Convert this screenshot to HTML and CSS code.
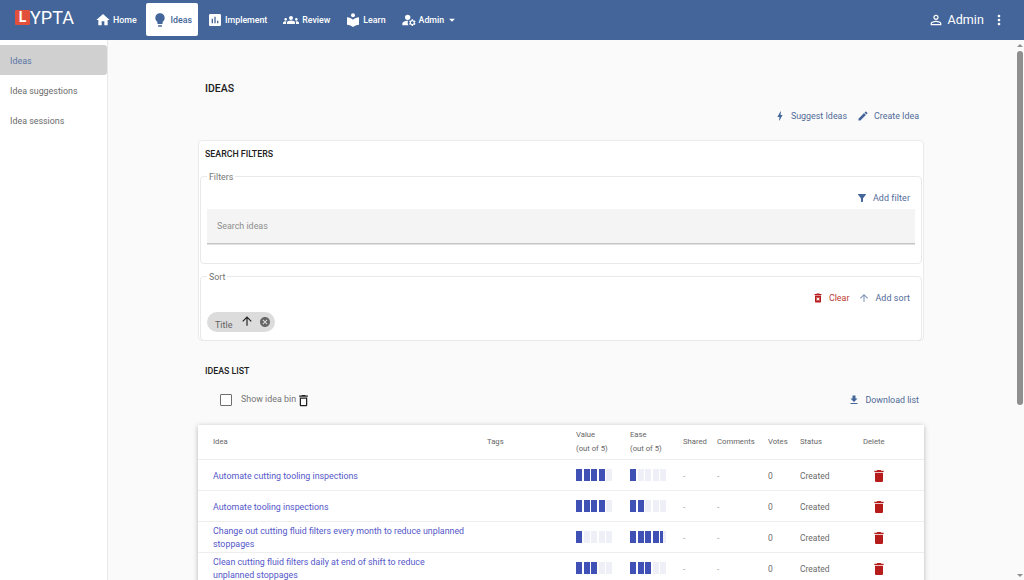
FILE: index.html
```html
<!DOCTYPE html>
<html lang="en">
<head>
<meta charset="utf-8">
<title>Ideas</title>
<link rel="stylesheet" href="styles.css">
</head>
<body>
<svg class="sprite" aria-hidden="true">
  <symbol id="i-home" viewBox="0 0 24 24"><path d="M10 20v-6h4v6h5v-8h3L12 3 2 12h3v8z"/></symbol>
  <symbol id="i-bulb" viewBox="0 0 24 24"><path d="M9 21c0 .55.45 1 1 1h4c.55 0 1-.45 1-1v-1H9v1zm3-19C8.14 2 5 5.14 5 9c0 2.38 1.19 4.47 3 5.74V17c0 .55.45 1 1 1h6c.55 0 1-.45 1-1v-2.26c1.81-1.27 3-3.36 3-5.74 0-3.86-3.14-7-7-7z"/></symbol>
  <symbol id="i-chart" viewBox="0 0 24 24"><path d="M19 3H5c-1.1 0-2 .9-2 2v14c0 1.1.9 2 2 2h14c1.1 0 2-.9 2-2V5c0-1.1-.9-2-2-2zM9 17H7v-7h2v7zm4 0h-2V7h2v10zm4 0h-2v-4h2v4z"/></symbol>
  <symbol id="i-groups" viewBox="0 0 24 24"><path d="M12 12.75c1.63 0 3.07.39 4.24.9 1.08.48 1.76 1.56 1.76 2.73V18H6v-1.61c0-1.18.68-2.26 1.76-2.73 1.17-.52 2.61-.91 4.24-.91zM4 13c1.1 0 2-.9 2-2s-.9-2-2-2-2 .9-2 2 .9 2 2 2zm1.13 1.1c-.37-.06-.74-.1-1.13-.1-.99 0-1.93.21-2.78.58C.48 14.9 0 15.62 0 16.43V18h4.5v-1.61c0-.83.23-1.61.63-2.29zM20 13c1.1 0 2-.9 2-2s-.9-2-2-2-2 .9-2 2 .9 2 2 2zm4 3.43c0-.81-.48-1.53-1.22-1.85-.85-.37-1.79-.58-2.78-.58-.39 0-.76.04-1.13.1.4.68.63 1.46.63 2.29V18H24v-1.57zM12 6c1.66 0 3 1.34 3 3s-1.34 3-3 3-3-1.34-3-3 1.34-3 3-3z"/></symbol>
  <symbol id="i-learn" viewBox="0 0 24 24"><path d="M12 11.55C9.64 9.35 6.48 8 3 8v11c3.48 0 6.64 1.35 9 3.55 2.36-2.19 5.52-3.55 9-3.55V8c-3.48 0-6.64 1.35-9 3.55zM12 8c1.66 0 3-1.34 3-3s-1.34-3-3-3-3 1.34-3 3 1.34 3 3 3z"/></symbol>
  <symbol id="i-manage" viewBox="0 0 24 24"><circle cx="10" cy="8" r="4"/><path d="M10.67 13.02c-.22-.01-.44-.02-.67-.02-2.42 0-4.68.67-6.61 1.82-.88.52-1.39 1.5-1.39 2.53V20h9.26c-.79-1.13-1.26-2.51-1.26-4 0-1.07.25-2.07.67-2.98zM20.75 16c0-.22-.03-.42-.06-.63l1.14-1.01-1-1.73-1.45.49c-.32-.27-.68-.48-1.08-.63L18 11h-2l-.3 1.49c-.4.15-.76.36-1.08.63l-1.45-.49-1 1.73 1.14 1.01c-.03.21-.06.41-.06.63s.03.42.06.63l-1.14 1.01 1 1.73 1.45-.49c.32.27.68.48 1.08.63L16 21h2l.3-1.49c.4-.15.76-.36 1.08-.63l1.45.49 1-1.73-1.14-1.01c.03-.21.06-.41.06-.63zM17 18c-1.1 0-2-.9-2-2s.9-2 2-2 2 .9 2 2-.9 2-2 2z"/></symbol>
  <symbol id="i-caret" viewBox="0 0 24 24"><path d="M7 10l5 5 5-5z"/></symbol>
  <symbol id="i-person" viewBox="0 0 24 24"><path d="M12 5.9c1.16 0 2.1.94 2.1 2.1s-.94 2.1-2.1 2.1S9.9 9.16 9.9 8s.94-2.1 2.1-2.1m0 9c2.97 0 6.1 1.46 6.1 2.1v1.1H5.9V17c0-.64 3.13-2.1 6.1-2.1M12 4C9.79 4 8 5.79 8 8s1.79 4 4 4 4-1.79 4-4-1.79-4-4-4zm0 9c-2.67 0-8 1.34-8 4v3h16v-3c0-2.66-5.33-4-8-4z"/></symbol>
  <symbol id="i-more" viewBox="0 0 24 24"><path d="M12 8c1.1 0 2-.9 2-2s-.9-2-2-2-2 .9-2 2 .9 2 2 2zm0 2c-1.1 0-2 .9-2 2s.9 2 2 2 2-.9 2-2-.9-2-2-2zm0 6c-1.1 0-2 .9-2 2s.9 2 2 2 2-.9 2-2-.9-2-2-2z"/></symbol>
  <symbol id="i-bolt" viewBox="0 0 24 24"><path d="M11 21h-1l1-7H7.5c-.58 0-.57-.32-.38-.66.19-.34.05-.08.07-.12C8.48 10.94 10.42 7.54 13 3h1l-1 7h3.5c.49 0 .56.33.47.51l-.07.15C12.96 17.55 11 21 11 21z"/></symbol>
  <symbol id="i-edit" viewBox="0 0 24 24"><path d="M3 17.25V21h3.75L17.81 9.94l-3.75-3.75L3 17.25zM20.71 7.04c.39-.39.39-1.02 0-1.41l-2.34-2.34c-.39-.39-1.02-.39-1.41 0l-1.83 1.83 3.75 3.75 1.83-1.83z"/></symbol>
  <symbol id="i-filter" viewBox="0 0 24 24"><path d="M4.25 5.61C6.27 8.2 10 13 10 13v6c0 .55.45 1 1 1h2c.55 0 1-.45 1-1v-6s3.72-4.8 5.74-7.39c.51-.66.04-1.61-.79-1.61H5.04c-.83 0-1.3.95-.79 1.61z"/></symbol>
  <symbol id="i-clear" viewBox="0 0 24 24"><path d="M6 19c0 1.1.9 2 2 2h8c1.1 0 2-.9 2-2V7H6v12zm2.46-7.12l1.41-1.41L12 12.59l2.12-2.12 1.41 1.41L13.41 14l2.12 2.12-1.41 1.41L12 15.41l-2.12 2.12-1.41-1.41L10.59 14l-2.13-2.12zM15.5 4l-1-1h-5l-1 1H5v2h14V4z"/></symbol>
  <symbol id="i-delete" viewBox="0 0 24 24"><path d="M6 19c0 1.1.9 2 2 2h8c1.1 0 2-.9 2-2V7H6v12zM19 4h-3.5l-1-1h-5l-1 1H5v2h14V4z"/></symbol>
  <symbol id="i-bin" viewBox="0 0 24 24"><path d="M6 19c0 1.1.9 2 2 2h8c1.1 0 2-.9 2-2V7H6v12zM8 9h8v10H8V9zm7.5-5l-1-1h-5l-1 1H5v2h14V4z"/></symbol>
  <symbol id="i-up" viewBox="0 0 24 24"><path d="M4 12l1.41 1.41L11 7.83V20h2V7.83l5.58 5.59L20 12l-8-8-8 8z"/></symbol>
  <symbol id="i-download" viewBox="0 0 24 24"><path d="M19 9h-4V3H9v6H5l7 7 7-7zM5 18v2h14v-2H5z"/></symbol>
  <symbol id="i-cancel" viewBox="0 0 24 24"><path d="M12 2C6.47 2 2 6.47 2 12s4.47 10 10 10 10-4.47 10-10S17.53 2 12 2zm5 13.59L15.59 17 12 13.41 8.41 17 7 15.59 10.59 12 7 8.41 8.41 7 12 10.59 15.59 7 17 8.41 13.41 12 17 15.59z"/></symbol>
</svg>

<header class="topbar">
  <div class="logo"><span class="logo-mark">L</span><span class="logo-text">YPTA</span></div>
  <nav class="nav">
    <a class="nav-item"><svg class="nav-icon"><use href="#i-home"/></svg>Home</a>
    <a class="nav-item active"><svg class="nav-icon"><use href="#i-bulb"/></svg>Ideas</a>
    <a class="nav-item"><svg class="nav-icon"><use href="#i-chart"/></svg>Implement</a>
    <a class="nav-item"><svg class="nav-icon wide"><use href="#i-groups"/></svg>Review</a>
    <a class="nav-item"><svg class="nav-icon nudge"><use href="#i-learn"/></svg>Learn</a>
    <a class="nav-item"><svg class="nav-icon nudge"><use href="#i-manage"/></svg>Admin<svg class="nav-caret"><use href="#i-caret"/></svg></a>
  </nav>
  <div class="user">
    <svg class="user-icon"><use href="#i-person"/></svg>
    <span class="user-name">Admin</span>
    <svg class="user-more"><use href="#i-more"/></svg>
  </div>
</header>

<div class="body-row">
  <aside class="sidebar">
    <a class="side-item active">Ideas</a>
    <a class="side-item">Idea suggestions</a>
    <a class="side-item">Idea sessions</a>
  </aside>

  <main class="main">
    <h1 class="page-title">IDEAS</h1>
    <div class="actions page-actions">
      <a class="action"><svg class="action-icon"><use href="#i-bolt"/></svg>Suggest Ideas</a>
      <a class="action"><svg class="action-icon"><use href="#i-edit"/></svg>Create Idea</a>
    </div>

    <section class="card">
      <h2 class="card-title">SEARCH FILTERS</h2>
      <fieldset class="group">
        <legend class="group-label">Filters</legend>
        <div class="actions group-actions">
          <a class="action"><svg class="action-icon"><use href="#i-filter"/></svg>Add filter</a>
        </div>
        <div class="search">Search ideas</div>
      </fieldset>
      <fieldset class="group sort-group">
        <legend class="group-label">Sort</legend>
        <div class="actions group-actions">
          <a class="action danger"><svg class="action-icon"><use href="#i-clear"/></svg>Clear</a>
          <a class="action"><svg class="action-icon muted"><use href="#i-up"/></svg>Add sort</a>
        </div>
        <div class="chip">
          <span class="chip-label">Title</span>
          <svg class="chip-arrow"><use href="#i-up"/></svg>
          <svg class="chip-close"><use href="#i-cancel"/></svg>
        </div>
      </fieldset>
    </section>

    <h2 class="list-title">IDEAS LIST</h2>
    <div class="list-tools">
      <label class="bin-toggle">
        <span class="checkbox"></span>
        <span class="bin-label">Show idea bin</span>
        <svg class="bin-icon"><use href="#i-bin"/></svg>
      </label>
      <a class="action"><svg class="action-icon"><use href="#i-download"/></svg>Download list</a>
    </div>

    <div class="table-wrap">
      <table class="table">
        <thead>
          <tr>
            <th class="c-idea">Idea</th>
            <th class="c-tags">Tags</th>
            <th class="c-value">Value<br>(out of 5)</th>
            <th class="c-ease">Ease<br>(out of 5)</th>
            <th class="c-shared">Shared</th>
            <th class="c-comments">Comments</th>
            <th class="c-votes">Votes</th>
            <th class="c-status">Status</th>
            <th class="c-delete">Delete</th>
          </tr>
        </thead>
        <tbody>
          <tr>
            <td><a class="idea-link">Automate cutting tooling inspections</a></td>
            <td></td>
            <td><div class="meter"><i class="on"></i><i class="on"></i><i class="on"></i><i class="on"></i><i></i></div></td>
            <td><div class="meter"><i class="on"></i><i></i><i></i><i></i><i></i></div></td>
            <td class="dash">-</td><td class="dash">-</td><td>0</td><td>Created</td>
            <td><svg class="row-delete"><use href="#i-delete"/></svg></td>
          </tr>
          <tr>
            <td><a class="idea-link">Automate tooling inspections</a></td>
            <td></td>
            <td><div class="meter"><i class="on"></i><i class="on"></i><i class="on"></i><i class="on"></i><i></i></div></td>
            <td><div class="meter"><i class="on"></i><i class="on"></i><i></i><i></i><i></i></div></td>
            <td class="dash">-</td><td class="dash">-</td><td>0</td><td>Created</td>
            <td><svg class="row-delete"><use href="#i-delete"/></svg></td>
          </tr>
          <tr>
            <td><a class="idea-link">Change out cutting fluid filters every month to reduce unplanned stoppages</a></td>
            <td></td>
            <td><div class="meter"><i class="on"></i><i></i><i></i><i></i><i></i></div></td>
            <td><div class="meter"><i class="on"></i><i class="on"></i><i class="on"></i><i class="on"></i><i class="part"></i></div></td>
            <td class="dash">-</td><td class="dash">-</td><td>0</td><td>Created</td>
            <td><svg class="row-delete"><use href="#i-delete"/></svg></td>
          </tr>
          <tr>
            <td><a class="idea-link">Clean cutting fluid filters daily at end of shift to reduce unplanned stoppages</a></td>
            <td></td>
            <td><div class="meter"><i class="on"></i><i class="on"></i><i class="on"></i><i></i><i></i></div></td>
            <td><div class="meter"><i class="on"></i><i class="on"></i><i class="on"></i><i></i><i></i></div></td>
            <td class="dash">-</td><td class="dash">-</td><td>0</td><td>Created</td>
            <td><svg class="row-delete"><use href="#i-delete"/></svg></td>
          </tr>
        </tbody>
      </table>
    </div>
  </main>

  <div class="scrollbar">
    <span class="scroll-arrow up"></span>
    <span class="scroll-thumb"></span>
    <span class="scroll-arrow down"></span>
  </div>
</div>
</body>
</html>
```

FILE: styles.css
```css
* { box-sizing: border-box; }
html, body { margin: 0; height: 100%; overflow: hidden; }
body {
  display: flex;
  flex-direction: column;
  width: 1024px;
  height: 580px;
  background: #fafafa;
  font-family: Roboto, "Liberation Sans", sans-serif;
  font-size: 9px;
  color: #616161;
}
svg { fill: currentColor; display: block; flex: none; }
.sprite { display: none; }

/* top bar */
.topbar {
  flex: none;
  height: 40px;
  display: flex;
  align-items: center;
  background: #43659a;
  color: #fff;
}
.logo { width: 88px; padding-left: 15px; display: flex; align-items: center; height: 40px; padding-bottom: 6px; flex: none; }
.logo-mark {
  width: 15px;
  height: 15px;
  background: #e2503c;
  border-radius: 1px;
  color: #fff;
  font-size: 14px;
  font-weight: 700;
  line-height: 15px;
  text-align: center;
}
.logo-text { font-size: 18px; line-height: 15px; }
.nav { display: flex; align-items: center; }
.nav-item {
  display: flex;
  align-items: center;
  height: 33px;
  padding: 0 7px;
  gap: 2px;
  border-radius: 2px;
  font-size: 8.8px;
  font-weight: 500;
  color: #fff;
}
.nav-item.active {
  background: #fff;
  color: #43659a;
  margin: -1px 2px 0;
  padding: 0 6px;
  gap: 3px;
}
.nav-icon { width: 16px; height: 16px; }
.nav-icon.wide { margin-left: 2px; margin-right: 1px; }
.nav-icon.nudge { margin-left: 1px; }
.nav-caret { width: 14px; height: 14px; margin-left: -1px; }
.user { margin: -1px 0 0 auto; display: flex; align-items: center; padding-right: 17px; }
.user-icon { width: 16px; height: 16px; margin-right: 3px; }
.user-name { font-size: 12.5px; letter-spacing: .1px; }
.user-more { width: 16px; height: 16px; margin-left: 7px; }

/* layout */
.body-row { flex: 1; min-height: 0; display: flex; }
.sidebar {
  flex: none;
  width: 108px;
  padding-top: 5px;
  background: #fff;
  border-right: 1px solid #e8e8e8;
}
.side-item {
  display: flex;
  align-items: center;
  height: 30px;
  margin-bottom: .4px;
  padding: 1px 0 0 10px;
  font-size: 8.9px;
  color: #6b6b6b;
}
.side-item.active {
  background: #d0d0d0;
  border-radius: 0 3px 3px 0;
  color: #5a74a4;
}
.main { flex: 1; min-width: 0; padding: 0 92px 0 90px; overflow: hidden; }
.scrollbar {
  flex: none;
  width: 8px;
  background: #fafafa;
  display: flex;
  flex-direction: column;
  align-items: center;
  padding-top: 4px;
}
.scroll-arrow { width: 0; height: 0; border-left: 3px solid transparent; border-right: 3px solid transparent; }
.scroll-arrow.up { border-bottom: 3px solid #8f8f8f; }
.scroll-arrow.down { border-top: 3px solid #8f8f8f; margin-top: auto; margin-bottom: 3px; }
.scroll-thumb { width: 6px; height: 354px; margin-top: 4px; background: #8f8f8f; border-radius: 3px; }

/* heading */
.page-title {
  margin: 42px 0 0 7px;
  font-size: 10.5px;
  line-height: 14px;
  font-weight: 500;
  color: #212121;
}
.actions { display: flex; justify-content: flex-end; align-items: center; }
.page-actions { margin-top: 13px; height: 14px; padding-right: 5px; gap: 10px; }
.action {
  display: flex;
  align-items: center;
  gap: 5px;
  font-size: 8.9px;
  color: #506a98;
}
.action-icon { width: 12px; height: 12px; color: #43659a; }
.action-icon.muted { color: #7d93b7; }
.action.danger { color: #c0392f; }
.action.danger .action-icon { color: #b71c1c; }

/* card */
.card {
  margin-top: 17px;
  height: 201px;
  padding: 0 1px;
  background: #fff;
  border: 1px solid #ebebeb;
  border-radius: 4px;
}
.card-title {
  margin: 8px 0 0 5px;
  font-size: 8.8px;
  line-height: 11px;
  font-weight: 500;
  color: #212121;
}
.group {
  margin: 10px 0 0;
  padding: 0 6px;
  height: 94px;
  min-width: 0;
  border: 1px solid #e9e9e9;
  border-radius: 4px;
}
.sort-group { height: 71px; margin-top: 6px; }
.group-label { margin-left: 0; padding: 2px 2px 0; font-size: 8.8px; line-height: 11px; color: #757575; }
.group-actions { height: 14px; margin-top: 8px; padding-right: 5px; gap: 9px; }
.group-actions .action { letter-spacing: .1px; }
.group-actions .action.danger { letter-spacing: 0; }
.search {
  display: flex;
  align-items: center;
  height: 35px;
  margin-top: 4px;
  padding-left: 10px;
  background: #f4f4f4;
  border-bottom: 1px solid #c4c4c4;
  box-shadow: 0 1px 0 #e2e2e2;
  font-size: 8.9px;
  color: #8e8e8e;
}
.chip {
  display: flex;
  align-items: center;
  width: 68px;
  height: 20px;
  margin-top: 7px;
  padding-left: 8px;
  background: #dcdcdc;
  border-radius: 10px;
  color: #616161;
}
.chip-label { font-size: 9px; padding-top: 5px; width: 24.5px; }
.chip-arrow { width: 14px; height: 14px; color: #212121; margin-top: -2px; }
.chip-close { width: 12px; height: 12px; margin-left: 5px; color: #666; }

/* list */
.list-title {
  margin: 25px 0 0 7px;
  font-size: 8.8px;
  line-height: 11px;
  font-weight: 500;
  color: #212121;
}
.list-tools {
  display: flex;
  justify-content: space-between;
  align-items: center;
  height: 18px;
  margin-top: 14px;
  padding: 0 5px 0 22px;
}
.bin-toggle { display: flex; align-items: center; }
.checkbox {
  width: 12px;
  height: 12px;
  background: #fff;
  border: 1.5px solid #6e6e6e;
  border-radius: 1px;
}
.bin-label { margin-left: 9px; font-size: 8.9px; color: #757575; margin-top: -2px; }
.bin-icon { width: 15px; height: 15px; margin-left: 0; color: #212121; }

.table-wrap {
  margin-top: 16px;
  background: #fff;
  box-shadow: 0 1px 5px rgba(0, 0, 0, .28);
}
.table { width: 100%; border-collapse: separate; border-spacing: 0; table-layout: fixed; }
th, td { padding: 0; text-align: left; vertical-align: middle; border-bottom: 1px solid #eeeeee; font-size: 8px; color: #6b6b6b; }
th { height: 35px; font-weight: 400; line-height: 14px; font-size: 7.7px; color: #666; }
td { height: 31px; font-size: 8.5px; }
td:nth-child(n+5) { padding-top: 2px; }
.c-idea { width: 289px; padding-left: 15px; }
.c-tags { width: 89px; }
.c-value { width: 54px; }
.c-ease { width: 53px; }
.c-shared { width: 34px; }
.c-comments { width: 51px; }
.c-votes { width: 32px; }
.c-status { width: 63px; }
td:first-child { padding-left: 15px; padding-right: 21px; }
.dash { color: #a5a5a5; }
.idea-link { display: block; padding-top: 2px; font-size: 8.85px; line-height: 13px; color: #5457c9; }
.meter { display: flex; gap: 1.5px; }
.meter i { width: 6px; height: 11.5px; background: #eff0f7; }
.meter i.on { background: #3f51b5; }
.meter i.part { background: linear-gradient(90deg, #3f51b5 42%, #eff0f7 42%); }
.row-delete { width: 16px; height: 16px; margin-left: 8px; color: #b71c1c; }
```
